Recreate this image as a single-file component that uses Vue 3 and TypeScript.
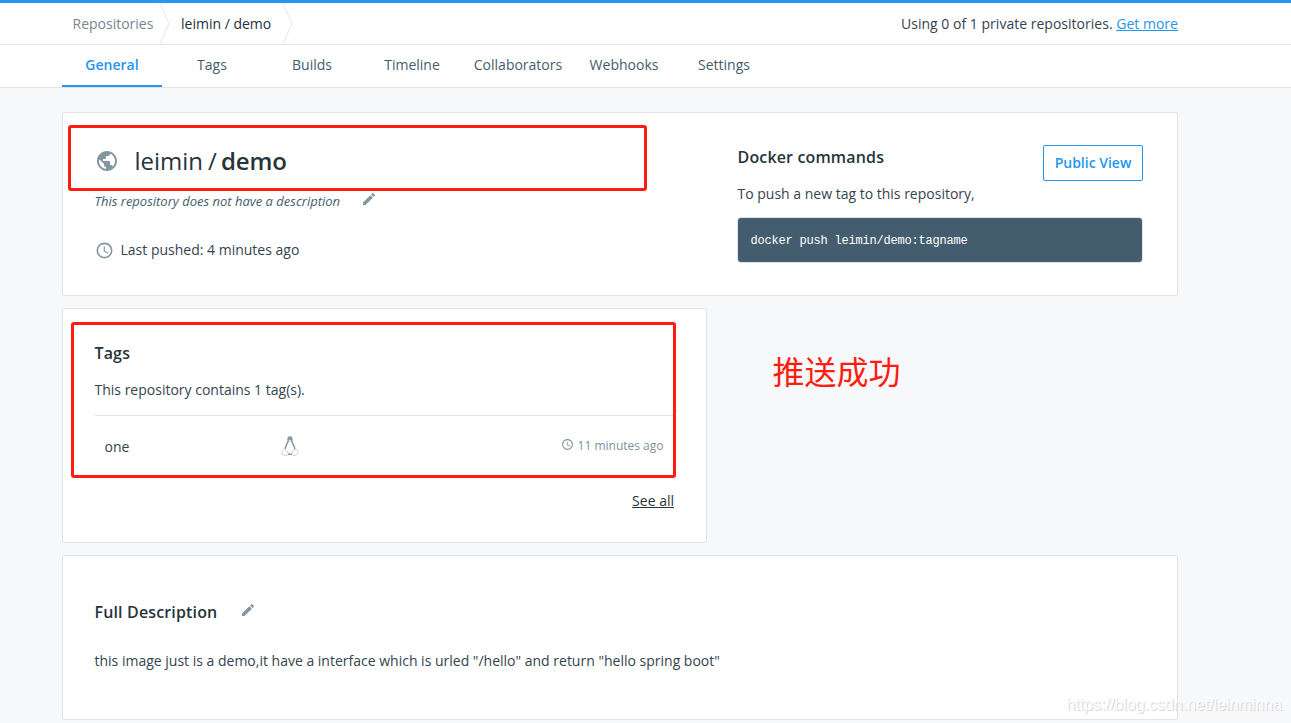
<script setup lang="ts">
interface Tab {
  label: string
  width: number
  active?: boolean
}

const tabs: Tab[] = [
  { label: 'General', width: 100, active: true },
  { label: 'Tags', width: 100 },
  { label: 'Builds', width: 100 },
  { label: 'Timeline', width: 100 },
  { label: 'Collaborators', width: 112 },
  { label: 'Webhooks', width: 100 },
  { label: 'Settings', width: 100 },
]

const pencil =
  'M3 17.25V21h3.75L17.81 9.94l-3.75-3.75L3 17.25zM20.71 7.04a1 1 0 0 0 0-1.41l-2.34-2.34a1 1 0 0 0-1.41 0l-1.83 1.83 3.75 3.75 1.83-1.83z'
const clock =
  'M11.99 2C6.47 2 2 6.48 2 12s4.47 10 9.99 10C17.52 22 22 17.52 22 12S17.52 2 11.99 2zM12 20c-4.42 0-8-3.58-8-8s3.58-8 8-8 8 3.58 8 8-3.58 8-8 8zm.5-13H11v6l5.25 3.15.75-1.23-4.5-2.67z'
const globe =
  'M12 2C6.48 2 2 6.48 2 12s4.48 10 10 10 10-4.48 10-10S17.52 2 12 2zm-1 17.93c-3.95-.49-7-3.85-7-7.93 0-.62.08-1.21.21-1.79L9 15v1c0 1.1.9 2 2 2v1.93zm6.9-2.54c-.26-.81-1-1.39-1.9-1.39h-1v-3c0-.55-.45-1-1-1H8v-2h2c.55 0 1-.45 1-1V7h2c1.1 0 2-.9 2-2v-.41c2.93 1.19 5 4.06 5 7.41 0 2.08-.8 3.97-2.1 5.39z'
</script>

<template>
  <div class="page">
    <header class="topbar">
      <div class="container topbar-row">
        <nav class="crumbs">
          <span class="crumb root">Repositories</span>
          <svg class="chevron" width="12" height="41" viewBox="0 0 12 41"><path d="M1 0.5L10 20.5L1 41" /></svg>
          <span class="crumb current">leimin / demo</span>
          <svg class="chevron" width="12" height="41" viewBox="0 0 12 41"><path d="M1 0.5L10 20.5L1 41" /></svg>
        </nav>
        <p class="usage">Using 0 of 1 private repositories. <a>Get more</a></p>
      </div>
    </header>
    <div class="tabbar">
      <div class="container tabs">
        <a
          v-for="tab in tabs"
          :key="tab.label"
          class="tab"
          :class="{ active: tab.active }"
          :style="{ width: tab.width + 'px' }"
        >{{ tab.label }}</a>
      </div>
    </div>

    <main class="container content">
      <section class="card summary">
        <div class="info">
          <div class="title">
            <svg class="icon" width="24" height="24" viewBox="0 0 24 24"><path :d="globe" /></svg>
            <h1><span class="owner">leimin</span><span class="slash">/</span><span class="repo">demo</span></h1>
          </div>
          <div class="short">
            <em>This repository does not have a description</em>
            <svg class="icon" width="16" height="16" viewBox="0 0 24 24"><path :d="pencil" /></svg>
          </div>
          <div class="pushed">
            <svg class="icon" width="19" height="19" viewBox="0 0 24 24"><path :d="clock" /></svg>
            <span>Last pushed: 4 minutes ago</span>
          </div>
        </div>
        <div class="commands">
          <div class="commands-head">
            <div>
              <h2>Docker commands</h2>
              <p>To push a new tag to this repository,</p>
            </div>
            <button class="public">Public View</button>
          </div>
          <pre class="code">docker push leimin/demo:tagname</pre>
        </div>
        <div class="mark mark-title"></div>
      </section>

      <div class="middle">
        <section class="card tags">
          <h2>Tags</h2>
          <p class="count">This repository contains 1 tag(s).</p>
          <div class="tag-row">
            <span class="tag-name">one</span>
            <svg class="tux" width="18" height="22" viewBox="0 0 18 22">
              <path d="M9 1.2C6.9 1.2 6.2 2.7 6.4 5C6.6 7.5 3.5 10.5 3.4 15C3.4 18 6 20 9 20C12 20 14.6 18 14.6 15C14.5 10.5 11.4 7.5 11.6 5C11.8 2.7 11.1 1.2 9 1.2Z" fill="#8397a1" />
              <path d="M8.9 6C7.3 6.2 7.1 8.5 6 10.6C4.9 12.8 4.6 15 5.7 17C6.9 19 11.1 19 12.3 17C13.5 15 13 12.6 11.9 10.6C10.8 8.5 10.5 6.2 8.9 6Z" fill="#fff" />
              <path d="M7.3 5.2L9 4.5L10.6 5.2L9 6.3Z" fill="#e4e9ec" />
              <path d="M3.1 13.8C4.6 13.6 6.5 16.3 7.1 18.4C7.2 20.5 5.6 21 4.1 20.3L1 19.5C.5 18.7 1.2 17.8 1.1 16.5C1.2 15.4 2.3 15.4 3.1 13.8Z" fill="#fff" stroke="#b9c5cb" stroke-width=".8" />
              <path d="M14.9 13.8C13.4 13.6 11.5 16.3 10.9 18.4C10.8 20.5 12.5 21 13.9 20.3L17 18.6C17.3 17.9 16.5 17.5 16.7 16.4C16.6 15.4 15.6 15.4 14.9 13.8Z" fill="#fff" stroke="#b9c5cb" stroke-width=".8" />
            </svg>
            <span class="tag-time">
              <svg class="icon" width="13" height="13" viewBox="0 0 24 24"><path :d="clock" /></svg>
              <span>11 minutes ago</span>
            </span>
          </div>
          <a class="see-all">See all</a>
          <div class="mark mark-tags"></div>
        </section>
        <p class="note">推送成功</p>
      </div>

      <section class="card full">
        <div class="full-head">
          <h2>Full Description</h2>
          <svg class="icon" width="16" height="16" viewBox="0 0 24 24"><path :d="pencil" /></svg>
        </div>
        <p>this image just is a demo,it have a interface which is urled "/hello" and return "hello spring boot"</p>
      </section>
    </main>
    <div class="watermark">https://blog.csdn.net/leinminna</div>
  </div>
</template>

<style>
body {
  margin: 0;
  background: #f7f8fa;
  overflow: hidden;
}
</style>

<style scoped>
.page {
  position: relative;
  height: 723px;
  overflow: hidden;
  background: #f7f8fa;
  color: #254356;
  font: 14px/20px 'Open Sans', 'Noto Sans', sans-serif;
}
.page * { box-sizing: border-box; }
h1, h2, p, pre { margin: 0; }
svg { display: block; flex: none; }
.icon { fill: #8397a1; }
.container { width: 1116px; margin-left: 62px; }

.topbar {
  height: 45px;
  background: #fff;
  border-top: 3px solid #2496ed;
  border-bottom: 1px solid #e1e4e7;
}
.topbar-row { display: flex; justify-content: space-between; height: 41px; }
.crumbs { display: flex; padding-left: 10.5px; }
.crumb { line-height: 41px; white-space: nowrap; }
.root { width: 86.5px; color: #7a8491; }
.current { width: 111px; padding-left: 10px; color: #22303d; }
.chevron { fill: none; stroke: #e4e6e9; stroke-width: 1; }
.usage { line-height: 41px; color: #33444f; white-space: nowrap; letter-spacing: 0.015px; }
.usage a { color: #2496ed; text-decoration: underline; }

.tabbar { height: 43px; background: #fff; border-bottom: 1px solid #e1e4e7; }
.tabs { display: flex; height: 42px; }
.tab { height: 42px; line-height: 40px; text-align: center; color: #445d6e; white-space: nowrap; }
.tab.active { color: #2496ed; font-weight: 600; border-bottom: 2px solid #2496ed; }

.content { display: flex; flex-direction: column; gap: 12px; padding-top: 24px; }
.card {
  position: relative;
  background: #fff;
  border: 1px solid #e1e4e7;
  border-radius: 2px;
}
h2 { font-size: 16px; line-height: 22px; font-weight: 600; color: #27343b; letter-spacing: 0.15px; }

.summary { display: flex; height: 184px; padding: 0 35px 0 31.5px; justify-content: space-between; }
.info { padding-top: 30px; }
.title { display: flex; align-items: center; height: 36px; }
.title h1 { display: flex; margin-left: 16px; font-size: 24px; line-height: 36px; font-weight: 400; color: #27343b; }
.slash { margin: 0 4px 0 5px; }
.repo { font-weight: 600; letter-spacing: -0.1px; }
.short { display: flex; align-items: center; margin-top: 12px; color: #445d6e; font-size: 13px; }
.short .icon { margin: -5px 0 0 21px; }
.pushed { display: flex; align-items: center; margin-top: 29px; color: #33444f; }
.pushed span { margin-left: 7px; }
.commands { width: 404.5px; padding-top: 32px; }
.commands-head { display: flex; justify-content: space-between; height: 73px; color: #33444f; }
.commands-head h2 { margin-top: 1px; }
.commands-head p { margin-top: 16px; }
.public {
  width: 100px;
  height: 36px;
  margin-right: -1px;
  padding: 0;
  background: #fff;
  border: 1px solid #2496ed;
  border-radius: 2px;
  color: #2496ed;
  font: 600 14px/34px 'Open Sans', sans-serif;
}
.code {
  height: 44px;
  padding: 0 13px;
  background: #445d6e;
  border-radius: 3px;
  box-shadow: 0 0 0 1px #dfe4e8;
  color: #fff;
  font: 12px/47px 'Liberation Mono', monospace;
  letter-spacing: -0.2px;
}
.mark { position: absolute; border: 3px solid #ff1d12; border-radius: 3px; pointer-events: none; }
.mark-title { left: 5px; top: 12px; width: 579px; height: 66px; }
.mark-tags { left: 8px; top: 13px; width: 605px; height: 156px; }

.middle { display: flex; height: 235px; }
.tags { width: 645px; padding: 33px 32px 0 31.5px; color: #33444f; }
.count { margin-top: 16px; }
.tag-row {
  display: flex;
  align-items: center;
  height: 63px;
  margin-top: 15px;
  padding: 0 10.5px 0 10px;
  border-top: 1px solid #e1e4e7;
}
.tag-name { width: 176px; }
.tux { margin-top: -2px; }
.tag-time { display: flex; align-items: center; margin: -2px 0 0 auto; font-size: 12px; color: #7d909b; }
.tag-time .icon { margin: -3px 4px 0 0; }
.see-all { display: block; margin-top: 13px; text-align: right; text-decoration: underline; color: #27343b; }
.note {
  margin: 38px 0 0 65.5px;
  color: #ff1d12;
  font: 32px/48px 'Noto Sans CJK SC', sans-serif;
}
.full { height: 165px; padding: 45px 32px 0 31.5px; color: #33444f; }
.full-head { display: flex; align-items: center; }
.full-head .icon { margin: -4px 0 0 22.5px; }
.full p { margin-top: 28px; }
.watermark {
  position: absolute;
  right: 9px;
  top: 695px;
  color: #fafafa;
  text-shadow: 1px 1px 0 #d9d9d9;
  font: 16px/20px 'Liberation Sans', sans-serif;
  letter-spacing: -0.02px;
}
</style>
